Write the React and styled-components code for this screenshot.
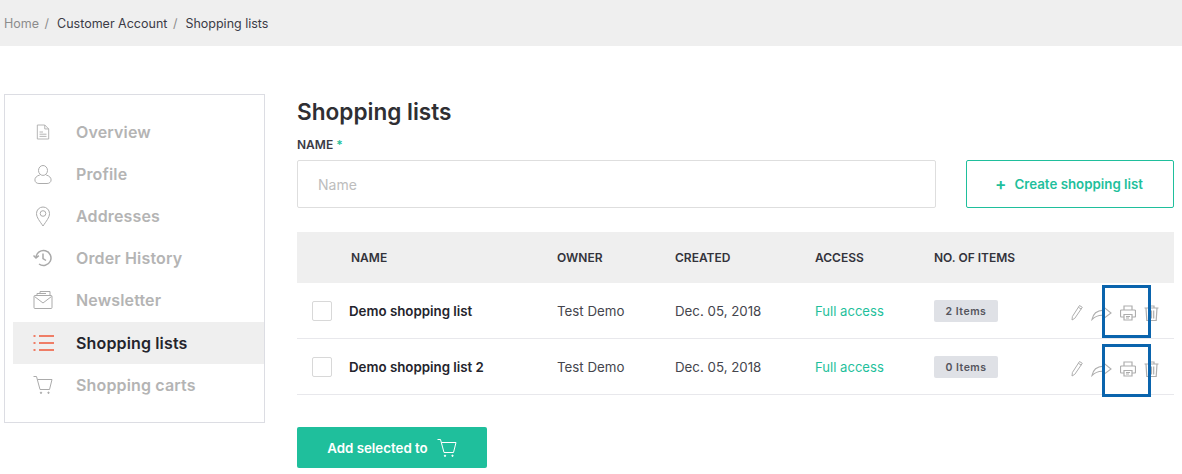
import React from 'react'
import styled, { createGlobalStyle } from 'styled-components'

const Global = createGlobalStyle`
  html, body { margin:0; padding:0; background:#fff; }
  body { font-family:Inter,"Liberation Sans",sans-serif; color:#333; }
  * { box-sizing:border-box; }
`

const DocIcon = () => (
  <svg width="14" height="16" viewBox="0 0 16 18" fill="none" stroke="currentColor" strokeWidth="1">
    <path d="M1.5 1h8.5l4.5 4.5v11.5h-13z" />
    <path d="M10 1v4.5h4.5M4 9h4M4 11.5h8M4 14h8" />
  </svg>
)
const UserIcon = () => (
  <svg width="18" height="21" viewBox="0 0 20 22" fill="none" stroke="currentColor" strokeWidth="1.100">
    <ellipse cx="10" cy="6.5" rx="5" ry="5.5" />
    <path d="M6.5 11.5C3 12.5 1 14.500 1 17c0 2.500 2 4 4.500 4h9c2.500 0 4.500-1.500 4.500-4 0-2.500-2-4.500-5.500-5.500" />
  </svg>
)
const PinIcon = () => (
  <svg width="16" height="21" viewBox="0 0 16 21" fill="none" stroke="currentColor" strokeWidth="1">
    <path d="M8 20C5 15.500 1.500 11.500 1.500 7.500a6.500 6.500 0 0 1 13 0C14.500 11.500 11 15.500 8 20z" />
    <circle cx="8" cy="7.500" r="2.800" />
  </svg>
)
const HistoryIcon = () => (
  <svg width="20" height="20" viewBox="0 0 20 20" fill="none" stroke="#a9a9a9" strokeWidth="1.500">
    <path d="M3 9.500a7.500 7.500 0 1 1 3 6.500" />
    <path d="M0.500 7.500l2.500 2.500 2.800-2.300M10 5.500v5l3 2" />
  </svg>
)
const MailIcon = () => (
  <svg width="20" height="20" viewBox="0 0 20 20" fill="none" stroke="currentColor" strokeWidth="1">
    <rect x="1" y="5.500" width="18" height="13" rx="1" />
    <path d="M1.500 6.500l8.500 6.500 8.500-6.500M4 5.500V3.500h9M7 3.500V1.500h10v4" />
  </svg>
)
const ListIcon = () => (
  <svg width="21" height="18" viewBox="0 0 21 18" fill="none" stroke="#f0583a" strokeWidth="1.500">
    <path d="M6 2h15M6 9h15M6 16h15M0.500 2h2M0.500 9h2M0.500 16h2" />
  </svg>
)
const CartIcon = ({ size = 20 }) => (
  <svg width={size} height={size} viewBox="0 0 20 20" fill="none" stroke="currentColor" strokeWidth="1">
    <path d="M0.500 1.500h3l3.500 13h9.500l2.500-10H4.500" />
    <circle cx="8" cy="17.800" r="0.700" fill="currentColor" />
    <circle cx="15.500" cy="17.800" r="0.700" fill="currentColor" />
  </svg>
)
const PencilIcon = () => (
  <svg width="12" height="17" viewBox="0 0 12 17" fill="none" stroke="currentColor" strokeWidth="1">
    <path d="M8.500 1.500l2.800 1.800-7.500 11L1 16l.4-3.500zM7.300 3.200l2.900 1.900" />
  </svg>
)
const ShareIcon = () => (
  <svg width="21" height="16" viewBox="0 0 22 16" fill="none" stroke="currentColor" strokeWidth="1.100">
    <path d="M1 15C2 9 6 5.500 13 5V1.500L21 8l-8 6v-3.500C8 10 4 12 1 15z" />
  </svg>
)
const PrintIcon = () => (
  <svg width="16" height="16" viewBox="0 0 16 16" fill="none" stroke="currentColor" strokeWidth="1.200">
    <path d="M4 5V1h8v4M4 12H1.500a1 1 0 0 1-1-1V6a1 1 0 0 1 1-1h13a1 1 0 0 1 1 1v5a1 1 0 0 1-1 1H12" />
    <path d="M4 9.500h8V15H4zM6 11.500h4M6 13h3" />
  </svg>
)
const TrashIcon = () => (
  <svg width="15" height="16" viewBox="0 0 15 16" fill="none" stroke="currentColor" strokeWidth="1.200">
    <path d="M0.500 3h14M5 3V1h5v2M2 3l.8 12.500h9.400L13 3M5.300 5.500v8M7.500 5.500v8M9.700 5.500v8" />
  </svg>
)

const Breadcrumbs = styled.div`
  height:46px;
  background:#efefef;
  padding:0 0 0 4px;
  display:flex;
  align-items:center;
  gap:5px;
  font-size:12.5px;
  color:#3b3b46;
`
const Crumb = styled.span`
  color:${p => (p.$muted ? '#8c8c8c' : '#3b3b46')};
  margin-right:${p => (p.$gap ? '3px' : '0')};
  i { font-style:normal; color:#8c8c8c; margin-left:2px; }
`
const Page = styled.div`
  display:flex;
  align-items:flex-start;
  gap:32px;
  padding:48px 8px 0 4px;
`
const Sidebar = styled.nav`
  width:261px;
  height:329px;
  flex:none;
  border:1px solid #dcdde3;
  padding:16px 0 0 8px;
  display:flex;
  flex-direction:column;
`
const NavItem = styled.a`
  height:42px;
  display:flex;
  align-items:center;
  font-size:16px;
  font-weight:600;
  letter-spacing:.15px;
  color:${p => (p.$active ? '#24242c' : '#b4b4b4')};
  background:${p => (p.$active ? '#efefef' : 'transparent')};
  margin-top:${p => (p.$active ? '1px' : '0')};
`
const NavIcon = styled.span`
  width:63px;
  padding-left:10px;
  flex:none;
  display:flex;
  justify-content:center;
  padding-right:13px;
  color:#ababab;
`
const Main = styled.main`
  flex:1;
  min-width:0;
`
const Title = styled.h1`
  margin:4px 0 0;
  font-size:22.6px;
  line-height:28px;
  font-weight:600;
  color:#2f2f33;
`
const Label = styled.div`
  margin-top:11px;
  font-size:12px;
  line-height:16px;
  font-weight:600;
  color:#3a3a44;
  b { color:#1fbf9c; font-weight:600; }
`
const FormRow = styled.div`
  margin-top:7px;
  display:flex;
  gap:30px;
`
const NameInput = styled.input`
  flex:1;
  height:48px;
  border:1px solid #dedede;
  border-radius:2px;
  padding:0 20px;
  font:14px Inter,"Liberation Sans",sans-serif;
  &::placeholder { color:#bdbdbd; opacity:1; }
`
const CreateButton = styled.button`
  width:208px;
  height:48px;
  flex:none;
  background:#fff;
  border:1px solid #1fbf9c;
  border-radius:2px;
  color:#1fbf9c;
  padding:0 2px 0 0;
  font:600 13.3px Inter,"Liberation Sans",sans-serif;
  span { font-size:17px; margin-right:8px; vertical-align:-1px; }
`
const Table = styled.div`
  margin-top:24px;
`
const gridColumns = '53px 207px 118px 140px 119px 119px 1fr'
const HeadRow = styled.div`
  height:51px;
  background:#efefef;
  display:grid;
  grid-template-columns:${gridColumns};
  align-items:center;
  font-size:12px;
  font-weight:600;
  color:#33333b;
`
const HeadName = styled.div`
  margin-left:1px;
`
const Row = styled.div`
  position:relative;
  height:56px;
  display:grid;
  grid-template-columns:${gridColumns};
  align-items:center;
  border-bottom:1px solid #e8e8ec;
  font-size:13.3px;
  color:#45454d;
`
const CheckCell = styled.div`
  padding-left:15px;
`
const Check = styled.span`
  display:block;
  width:20px;
  height:20px;
  border:1px solid #d8d8d8;
  border-radius:2px;
`
const ListName = styled.div`
  margin-left:-1px;
  font-weight:600;
  color:#24242c;
`
const Access = styled.div`
  font-size:13.1px;
  color:#1fbf9c;
`
const Badge = styled.span`
  display:inline-flex;
  align-items:center;
  justify-content:center;
  width:64px;
  height:22px;
  padding-top:1px;
  border-radius:2px;
  background:#dfe1e6;
  color:#55555d;
  font-size:10.5px;
  font-weight:600;
  letter-spacing:.5px;
`
const Actions = styled.div`
  display:flex;
  align-items:center;
  justify-content:flex-end;
  padding:4px 15px 0 0;
  gap:8px;
  color:#aeaeae;
`
const Highlight = styled.div`
  position:absolute;
  left:805px;
  top:${p => p.$top}px;
  width:49px;
  height:53px;
  border:3px solid #0a64ad;
  pointer-events:none;
`
const AddButton = styled.button`
  margin-top:32px;
  width:190px;
  height:41px;
  display:flex;
  align-items:center;
  justify-content:center;
  gap:9px;
  background:#1fbf9c;
  border:0;
  border-radius:2px;
  color:#fff;
  font:600 13.3px Inter,"Liberation Sans",sans-serif;
`

const navItems = [
  ['Overview', <DocIcon />],
  ['Profile', <UserIcon />],
  ['Addresses', <PinIcon />],
  ['Order History', <HistoryIcon />],
  ['Newsletter', <MailIcon />],
  ['Shopping lists', <ListIcon />, true],
  ['Shopping carts', <CartIcon />],
]

const lists = [
  { name: 'Demo shopping list', items: '2 Items', top: 2 },
  { name: 'Demo shopping list 2', items: '0 Items', top: 5 },
]

export default function App() {
  return (
    <>
      <Global />
      <Breadcrumbs>
        <Crumb $muted $gap>Home<i> /</i></Crumb>
        <Crumb $gap>Customer Account<i> /</i></Crumb>
        <Crumb>Shopping lists</Crumb>
      </Breadcrumbs>
      <Page>
        <Sidebar>
          {navItems.map(([label, icon, active]) => (
            <NavItem key={label} $active={active}>
              <NavIcon>{icon}</NavIcon>
              {label}
            </NavItem>
          ))}
        </Sidebar>
        <Main>
          <Title>Shopping lists</Title>
          <Label>NAME <b>*</b></Label>
          <FormRow>
            <NameInput placeholder="Name" />
            <CreateButton><span>+</span>Create shopping list</CreateButton>
          </FormRow>
          <Table>
            <HeadRow>
              <div />
              <HeadName>NAME</HeadName>
              <div>OWNER</div>
              <div>CREATED</div>
              <div>ACCESS</div>
              <div>NO. OF ITEMS</div>
            </HeadRow>
            {lists.map(list => (
              <Row key={list.name}>
                <CheckCell><Check /></CheckCell>
                <ListName>{list.name}</ListName>
                <div>Test Demo</div>
                <div>Dec. 05, 2018</div>
                <Access>Full access</Access>
                <div><Badge>{list.items}</Badge></div>
                <Actions>
                  <PencilIcon />
                  <ShareIcon />
                  <PrintIcon />
                  <TrashIcon />
                </Actions>
                <Highlight $top={list.top} />
              </Row>
            ))}
          </Table>
          <AddButton>Add selected to <CartIcon /></AddButton>
        </Main>
      </Page>
    </>
  )
}
